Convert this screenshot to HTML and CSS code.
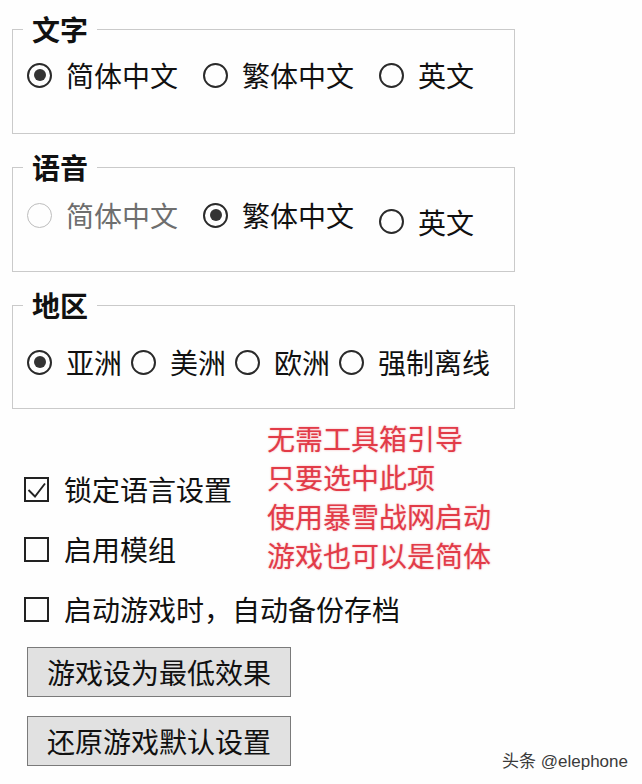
FILE: index.html
```html
<!DOCTYPE html>
<html lang="zh-CN">
<head>
    <meta charset="UTF-8">
    <meta name="viewport" content="width=device-width, initial-scale=1.0">
    <title>游戏设置</title>
    <link rel="stylesheet" href="styles.css">
</head>
<body>
    <div class="panel">
        <fieldset class="group group-text">
            <legend>文字</legend>
            <div class="options">
                <label class="option"><span class="radio checked"></span>简体中文</label>
                <label class="option"><span class="radio"></span>繁体中文</label>
                <label class="option"><span class="radio"></span>英文</label>
            </div>
        </fieldset>
        <fieldset class="group group-voice">
            <legend>语音</legend>
            <div class="options">
                <label class="option disabled"><span class="radio"></span>简体中文</label>
                <label class="option"><span class="radio checked"></span>繁体中文</label>
                <label class="option option-low"><span class="radio"></span>英文</label>
            </div>
        </fieldset>
        <fieldset class="group group-region">
            <legend>地区</legend>
            <div class="options options-tight">
                <label class="option"><span class="radio checked"></span>亚洲</label>
                <label class="option"><span class="radio"></span>美洲</label>
                <label class="option"><span class="radio"></span>欧洲</label>
                <label class="option"><span class="radio"></span>强制离线</label>
            </div>
        </fieldset>

        <div class="extras">
            <div class="checks">
                <label class="check">
                    <span class="box">
                        <svg width="21" height="21" viewBox="0 0 21 21"><polyline points="2.5,11 9,17.5 19,4.5" fill="none" stroke="#222" stroke-width="1.9"/></svg>
                    </span>锁定语言设置
                </label>
                <label class="check"><span class="box"></span>启用模组</label>
            </div>
            <div class="note">无需工具箱引导<br>只要选中此项<br>使用暴雪战网启动<br>游戏也可以是简体</div>
        </div>
        <label class="check check-last"><span class="box"></span>启动游戏时，自动备份存档</label>

        <div class="buttons">
            <button class="button">游戏设为最低效果</button>
            <button class="button">还原游戏默认设置</button>
        </div>
    </div>
    <div class="watermark">头条 @elephone</div>
</body>
</html>
```

FILE: styles.css
```css
body {
    font-family: "Noto Sans CJK SC", "Liberation Sans", sans-serif;
    font-size: 28px;
    color: #111;
    margin: 0;
    padding: 0;
    background-color: #fefefe;
}
.panel {
    padding: 13px 0 0 12px;
}
.group {
    width: 503px;
    box-sizing: border-box;
    margin: 0 0 17px 0;
    border: 1px solid #cacaca;
    padding: 14px 0 42px 0;
}
.group legend {
    font-weight: bold;
    line-height: 32px;
    margin-left: 10px;
    padding: 0 9px;
}
.group-voice {
    padding-top: 16px;
    padding-bottom: 40px;
}
.group-region {
    padding-top: 25px;
    padding-bottom: 30px;
    margin-bottom: 0;
}
.options {
    display: flex;
    align-items: center;
    gap: 25px;
    height: 32px;
    padding-left: 14px;
}
.options-tight {
    gap: 9px;
}
.option {
    display: flex;
    align-items: center;
    gap: 14px;
    line-height: 32px;
    white-space: nowrap;
}
.option-low {
    margin-top: 13px;
}
.radio {
    width: 25px;
    height: 25px;
    box-sizing: border-box;
    border: 2px solid #2a2a2a;
    border-radius: 50%;
    display: flex;
    align-items: center;
    justify-content: center;
    flex-shrink: 0;
}
.radio.checked::after {
    content: "";
    width: 12px;
    height: 12px;
    border-radius: 50%;
    background-color: #333;
}
.disabled {
    color: #6e6e6e;
}
.disabled .radio {
    border: 1px solid #bdbdbd;
}
.extras {
    display: flex;
    align-items: flex-start;
    margin-top: 10px;
}
.checks {
    display: flex;
    flex-direction: column;
    gap: 28px;
    padding-top: 54px;
    width: 255px;
}
.check {
    display: flex;
    align-items: center;
    gap: 15px;
    line-height: 32px;
    margin-left: 12px;
}
.check-last {
    margin-top: 18px;
}
.box {
    width: 25px;
    height: 25px;
    box-sizing: border-box;
    border: 2px solid #222;
    display: flex;
    align-items: center;
    justify-content: center;
    flex-shrink: 0;
}
.note {
    color: #e23b48;
    line-height: 39px;
    text-shadow: 0 0 2px rgba(226, 59, 72, 0.45);
    white-space: nowrap;
}
.buttons {
    display: flex;
    flex-direction: column;
    gap: 19px;
    margin: 22px 0 0 15px;
}
.button {
    width: 264px;
    height: 50px;
    font-family: "Noto Sans CJK SC", "Liberation Sans", sans-serif;
    font-size: 28px;
    color: #111;
    background-color: #e1e1e1;
    border: 1px solid #7a7a7a;
    border-radius: 0;
    padding: 0;
    line-height: 32px;
}
.watermark {
    position: absolute;
    right: 14px;
    top: 747px;
    font-family: "Liberation Sans", "Noto Sans CJK SC", sans-serif;
    font-size: 17px;
    color: #3a3a3a;
}
```
